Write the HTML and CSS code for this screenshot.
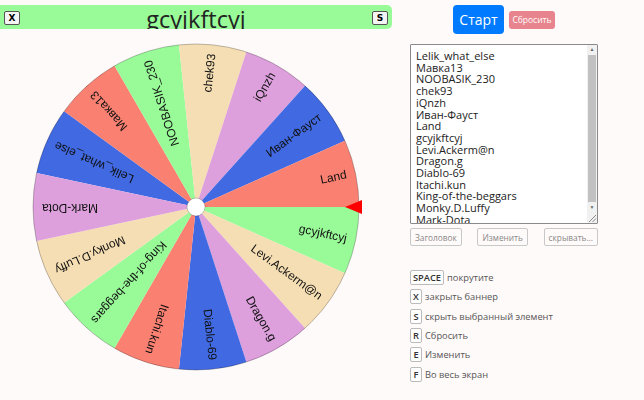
FILE: index.html
```html
<!DOCTYPE html>
<html lang="ru">
<head>
    <meta charset="UTF-8">
    <meta name="viewport" content="width=device-width, initial-scale=1.0">
    <title>Колесо имён</title>
    <link rel="stylesheet" href="styles.css">
</head>
<body>

    <!-- Left side: winner banner and the wheel -->
    <div class="wheel-side">
        <div class="banner" id="banner">
            <button class="banner-btn" title="закрыть баннер">X</button>
            <span class="banner-title" id="winner">gcyjkftcyj</span>
            <button class="banner-btn" title="скрыть выбранный элемент">S</button>
        </div>
        <canvas id="wheel" width="392" height="340"></canvas>
    </div>

    <!-- Right side: controls, names and shortcuts -->
    <div class="controls">
        <div class="top-buttons">
            <button class="btn-start">Старт</button>
            <button class="btn-reset" disabled>Сбросить</button>
        </div>

        <div class="names-box">
            <textarea id="names" spellcheck="false">Lelik_what_else
Мавка13
NOOBASIK_230
chek93
iQnzh
Иван-Фауст
Land
gcyjkftcyj
Levi.Ackerm@n
Dragon.g
Diablo-69
Itachi.kun
King-of-the-beggars
Monky.D.Luffy
Mark-Dota</textarea>
            <!-- scrollbar of the list -->
            <div class="scrollbar">
                <span class="scroll-arrow">&#9650;</span>
                <span class="scroll-thumb"></span>
                <span class="scroll-arrow">&#9660;</span>
                <svg class="resize-grip" width="10" height="10" viewBox="0 0 10 10">
                    <path d="M9 2 L2 9 M9 5.5 L5.5 9" stroke="#8a8a8a" stroke-width="1" fill="none"/>
                </svg>
            </div>
        </div>

        <div class="list-buttons">
            <button class="btn-small">Заголовок</button>
            <button class="btn-small">Изменить</button>
            <button class="btn-small">скрывать...</button>
        </div>

        <ul class="shortcuts">
            <li><kbd>SPACE</kbd> покрутите</li>
            <li><kbd>X</kbd> закрыть баннер</li>
            <li><kbd>S</kbd> скрыть выбранный элемент</li>
            <li><kbd>R</kbd> Сбросить</li>
            <li><kbd>E</kbd> Изменить</li>
            <li><kbd>F</kbd> Во весь экран</li>
        </ul>
    </div>

    <script>
        const colors = ['#4169e1', '#fa8072', '#98fb98', '#f5deb3', '#dda0dd'];

        function drawWheel() {
            const canvas = document.getElementById('wheel');
            const ctx = canvas.getContext('2d');
            const names = document.getElementById('names').value.split('\n').filter(n => n.trim() !== '');

            const cx = 196;
            const cy = 170;
            const radius = 163;
            const arc = Math.PI * 2 / names.length;
            // the current winner stops right under the pointer
            const offset = -names.indexOf('gcyjkftcyj') * arc;

            ctx.clearRect(0, 0, canvas.width, canvas.height);

            names.forEach((name, i) => {
                const start = offset + i * arc;
                ctx.beginPath();
                ctx.moveTo(cx, cy);
                ctx.arc(cx, cy, radius, start, start + arc);
                ctx.closePath();
                ctx.fillStyle = colors[i % colors.length];
                ctx.fill();

                ctx.save();
                ctx.translate(cx, cy);
                ctx.rotate(start + arc / 2);
                ctx.fillStyle = '#111';
                ctx.font = '12px "Liberation Sans", Arial, sans-serif';
                ctx.textAlign = 'right';
                ctx.textBaseline = 'middle';
                ctx.fillText(name, radius - 9, 0);
                ctx.restore();
            });

            // rim
            ctx.beginPath();
            ctx.arc(cx, cy, radius, 0, Math.PI * 2);
            ctx.strokeStyle = 'rgba(0, 0, 0, 0.25)';
            ctx.lineWidth = 1;
            ctx.stroke();

            // hub
            ctx.beginPath();
            ctx.arc(cx, cy, 9, 0, Math.PI * 2);
            ctx.fillStyle = '#fff';
            ctx.fill();
            ctx.strokeStyle = 'rgba(0, 0, 0, 0.2)';
            ctx.stroke();

            // pointer
            ctx.beginPath();
            ctx.moveTo(345, cy);
            ctx.lineTo(362, cy - 7);
            ctx.lineTo(362, cy + 7);
            ctx.closePath();
            ctx.fillStyle = '#ff0000';
            ctx.fill();
        }

        drawWheel();
    </script>

</body>
</html>
```

FILE: styles.css
```css
body {
    margin: 0;
    padding: 0;
    background-color: #fffafa;
    font-family: "Open Sans", "Noto Sans", sans-serif;
    display: flex;
    align-items: flex-start;
}

/* Left side */
.wheel-side {
    width: 392px;
    display: flex;
    flex-direction: column;
}

.banner {
    margin-top: 5px;
    height: 24px;
    background-color: #98fb98;
    border-radius: 0 5px 5px 0;
    display: flex;
    align-items: flex-start;
    overflow: hidden;
}

.banner-title {
    flex: 1;
    text-align: center;
    font-size: 23.5px;
    line-height: 28px;
    color: #222;
}

.banner-btn {
    margin: 6px 4px 0 4px;
    width: 16px;
    height: 14px;
    padding: 0;
    background-color: #f4f4f4;
    border: 1px solid #555;
    border-radius: 2px;
    font-family: "DejaVu Sans", sans-serif;
    font-size: 9px;
    font-weight: bold;
    line-height: 12px;
    color: #000;
}

#wheel {
    margin-top: 8px;
    display: block;
}

/* Right side */
.controls {
    margin-left: 18px;
    width: 188px;
    display: flex;
    flex-direction: column;
}

.top-buttons {
    margin-top: 5px;
    height: 29px;
    display: flex;
    justify-content: center;
    align-items: center;
    gap: 5px;
}

.btn-start {
    width: 51px;
    height: 29px;
    padding: 0;
    background-color: #007bff;
    color: #fff;
    border: none;
    border-radius: 4px;
    font-family: inherit;
    font-size: 14px;
}

.btn-reset {
    width: 46px;
    height: 18px;
    padding: 0;
    background-color: #e7848d;
    color: #fff;
    border: none;
    border-radius: 3px;
    font-family: inherit;
    font-size: 8.5px;
}

.names-box {
    margin-top: 10px;
    height: 180px;
    box-sizing: border-box;
    border: 1px solid #8a8a8a;
    border-radius: 1px;
    background-color: #fff;
    display: flex;
}

.names-box textarea {
    flex: 1;
    min-width: 0;
    margin: 0;
    padding: 5px 4px 0 5px;
    border: none;
    outline: none;
    background-color: #fff;
    font-family: "Open Sans", "Noto Sans", sans-serif;
    font-size: 11px;
    line-height: 11.7px;
    color: #222;
    resize: none;
    overflow: hidden;
}

.scrollbar {
    width: 10px;
    background-color: #f1f1f1;
    display: flex;
    flex-direction: column;
    align-items: center;
}

.scroll-arrow {
    height: 9px;
    font-size: 5px;
    line-height: 9px;
    color: #6a6a6a;
}

.scroll-thumb {
    width: 8px;
    height: 147px;
    margin: 1px 0;
    background-color: #c1c1c1;
}

.resize-grip {
    margin-top: auto;
    display: block;
}

.list-buttons {
    margin-top: 4px;
    display: flex;
    justify-content: space-between;
}

.btn-small {
    height: 18px;
    padding: 0 4px;
    background-color: #fffafa;
    border: 1px solid #c8c8c8;
    border-radius: 2px;
    font-family: inherit;
    font-size: 8.3px;
    color: #888;
}

.shortcuts {
    list-style: none;
    margin: 22px 0 0 0;
    padding: 0;
    font-size: 9.3px;
    color: #555;
}

.shortcuts li {
    height: 19.3px;
    display: flex;
    align-items: center;
    gap: 3px;
}

kbd {
    display: inline-block;
    min-width: 12px;
    height: 15px;
    padding: 0 2px;
    box-sizing: border-box;
    border: 1px solid #bbb;
    border-radius: 2px;
    background-color: #fff;
    font-family: "Open Sans", sans-serif;
    font-size: 9.3px;
    font-weight: 600;
    line-height: 13px;
    text-align: center;
    color: #333;
}
```
